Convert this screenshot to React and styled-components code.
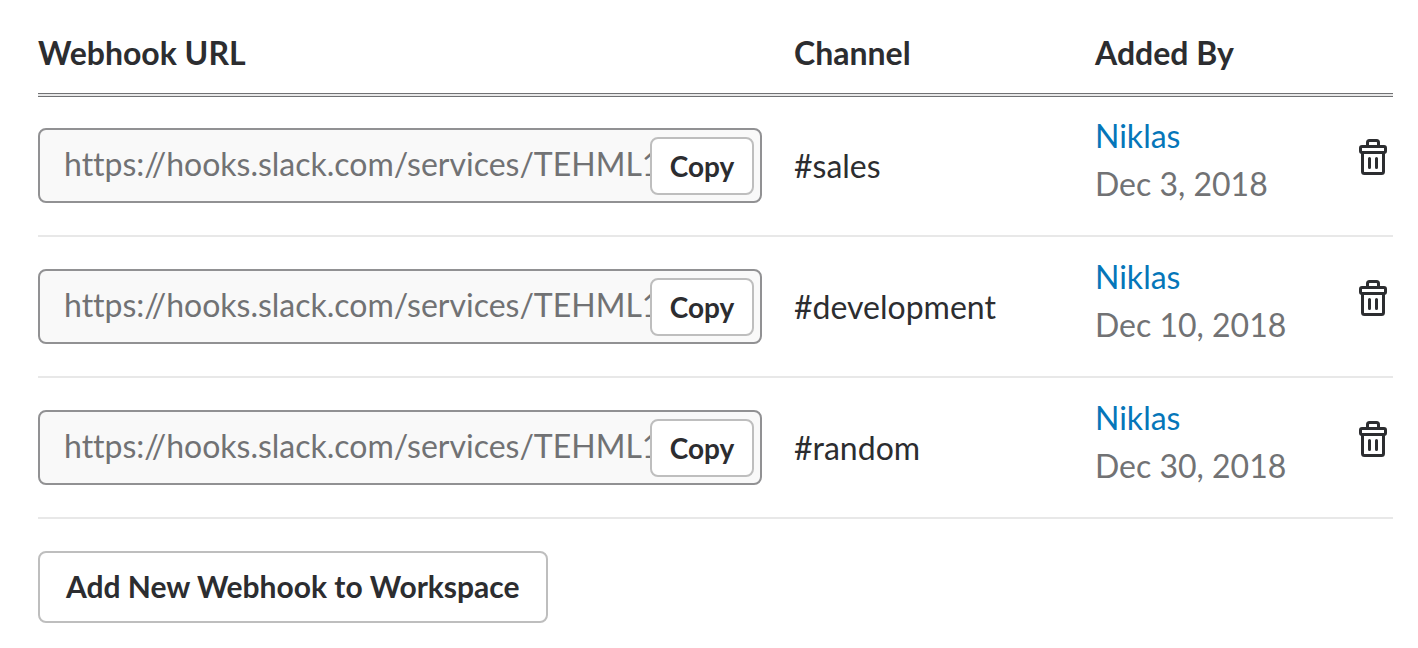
import React from "react";
import styled, { createGlobalStyle } from "styled-components";

const GlobalStyle = createGlobalStyle`
  *, *::before, *::after { box-sizing: border-box; }
  body {
    margin: 0;
    background: #ffffff;
    color: #2c2d30;
    font-family: Lato, "Liberation Sans", sans-serif;
    font-size: 32px;
    line-height: 48px;
    font-variant-ligatures: none;
  }
`;

const Page = styled.main`
  padding: 24px 25px 24px 38px;
`;

const Table = styled.table`
  width: 100%;
  table-layout: fixed;
  border-collapse: separate;
  border-spacing: 0;
`;

const Col = styled.col`
  width: ${({ $width }) => $width || "auto"};
`;

const HeadCell = styled.th`
  padding: 5px 0 16px;
  border-bottom: 4px double #717274;
  background: linear-gradient(#e8e8e8, #e8e8e8) bottom / 100% 4px no-repeat border-box;
  font-weight: 700;
  text-align: left;
`;

const Cell = styled.td`
  height: 141px;
  padding: 0;
  border-bottom: 2px solid #e8e8e8;
  vertical-align: middle;

  tr:first-child > & {
    height: 140px;
  }
`;

const UrlCell = styled(Cell)`
  padding: 0 32px 32px 0;
  vertical-align: bottom;
`;

const UrlField = styled.div`
  display: flex;
  align-items: center;
  height: 75px;
  padding: 0 6px 0 24px;
  border: 2px solid #919193;
  border-radius: 8px;
  background: #f9f9f9;
`;

const UrlInput = styled.input`
  flex: 1;
  min-width: 0;
  height: 48px;
  padding: 0 0 4px;
  border: 0;
  outline: 0;
  background: transparent;
  color: #717274;
  font: inherit;
  font-variant-ligatures: none;
`;

const Button = styled.button`
  flex: none;
  border: 2px solid #bebebe;
  border-radius: 8px;
  background: #ffffff;
  color: #2c2d30;
  font-family: inherit;
  font-weight: 700;
  cursor: pointer;
`;

const CopyButton = styled(Button)`
  width: 104px;
  height: 58px;
  padding: 0;
  font-size: 28px;
`;

const AddButton = styled(Button)`
  height: 72px;
  margin-top: 32px;
  padding: 0 26px 2px;
  font-size: 30px;
`;

const Author = styled.a`
  display: block;
  color: #0576b9;
  text-decoration: none;
`;

const AddedOn = styled.div`
  color: #717274;
`;

const AddedCell = styled(Cell)`
  padding-bottom: 12px;
`;

const ActionCell = styled(Cell)`
  padding: 0 6px 18px 0;
`;

const DeleteButton = styled.button`
  display: flex;
  margin-left: auto;
  padding: 0;
  border: 0;
  background: transparent;
  color: #2c2d30;
  cursor: pointer;
`;

function TrashIcon() {
  return (
    <svg width="28" height="36" viewBox="0 0 28 36" fill="none" stroke="currentColor" strokeWidth="3" strokeLinejoin="round" strokeLinecap="round" aria-hidden="true">
      <path d="M8.5 7V3.500a2 2 0 0 1 2-2h7a2 2 0 0 1 2 2V7" />
      <rect x="1.5" y="7.5" width="25" height="6" rx="1.5" />
      <path d="M3.500 14v18.500a2 2 0 0 0 2 2h17a2 2 0 0 0 2-2V14M10.500 19.500v9M17.500 19.500v9" />
    </svg>
  );
}

const webhooks = [
  { channel: "#sales", author: "Niklas", date: "Dec 3, 2018" },
  { channel: "#development", author: "Niklas", date: "Dec 10, 2018" },
  { channel: "#random", author: "Niklas", date: "Dec 30, 2018" },
];

export default function App() {
  return (
    <Page>
      <GlobalStyle />
      <Table>
        <colgroup>
          <Col />
          <Col $width="301px" />
          <Col $width="240px" />
          <Col $width="58px" />
        </colgroup>
        <thead>
          <tr>
            <HeadCell scope="col">Webhook URL</HeadCell>
            <HeadCell scope="col">Channel</HeadCell>
            <HeadCell scope="col">Added By</HeadCell>
            <HeadCell scope="col" aria-label="Actions" />
          </tr>
        </thead>
        <tbody>
          {webhooks.map(({ channel, author, date }) => (
            <tr key={channel}>
              <UrlCell>
                <UrlField>
                  <UrlInput readOnly aria-label={`Webhook URL for ${channel}`} defaultValue="https://hooks.slack.com/services/TEHML1" />
                  <CopyButton type="button">Copy</CopyButton>
                </UrlField>
              </UrlCell>
              <Cell>{channel}</Cell>
              <AddedCell>
                <Author href="#niklas">{author}</Author>
                <AddedOn>{date}</AddedOn>
              </AddedCell>
              <ActionCell>
                <DeleteButton type="button" aria-label={`Delete webhook for ${channel}`}>
                  <TrashIcon />
                </DeleteButton>
              </ActionCell>
            </tr>
          ))}
        </tbody>
      </Table>
      <AddButton type="button">Add New Webhook to Workspace</AddButton>
    </Page>
  );
}
